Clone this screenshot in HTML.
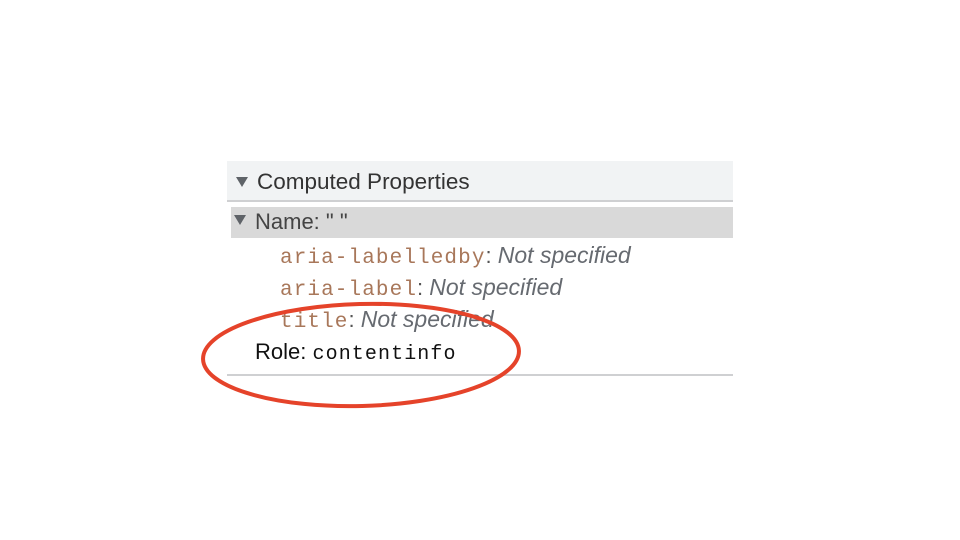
<!DOCTYPE html>
<html><head><style>
body{margin:0;width:960px;height:540px;background:#fff;position:relative;overflow:hidden;font-family:"Liberation Sans",sans-serif}
.a{position:absolute;white-space:nowrap}
.hdr{left:227px;top:161px;width:506px;height:39px;background:#f1f3f4;border-bottom:2px solid #cfd0d2}
.name{left:231px;top:207px;width:502px;height:31px;background:#d9d9d9}
.tri{position:absolute;width:0;height:0;border-left:6px solid transparent;border-right:6px solid transparent;border-top:10px solid #5f6368}
.m{font-family:"Liberation Mono",monospace;font-size:21px;letter-spacing:1.1px;color:#a8775a}
.i{font-style:italic;color:#666a70;font-size:23px}
.row{left:280px;font-size:22px;color:#555;line-height:24px}
</style></head><body>
<div class="a hdr"></div>
<div class="tri" style="left:236px;top:177px"></div>
<div class="a" style="left:257px;top:169px;font-size:22.5px;color:#333;line-height:26px">Computed Properties</div>
<div class="a name"></div>
<div class="tri" style="left:234px;top:215px"></div>
<div class="a" style="left:255px;top:210px;font-size:22px;color:#444;line-height:24px">Name: " "</div>
<div class="a row" style="top:243px"><span class="m">aria-labelledby</span>: <span class="i">Not specified</span></div>
<div class="a row" style="top:275px"><span class="m">aria-label</span>: <span class="i">Not specified</span></div>
<div class="a row" style="top:307px"><span class="m">title</span>: <span class="i">Not specified</span></div>
<div class="a" style="left:255px;top:340px;font-size:22px;color:#111;line-height:24px">Role: <span class="m" style="color:#111;font-size:20px;letter-spacing:1.1px">contentinfo</span></div>
<div class="a" style="left:227px;top:374px;width:506px;height:2px;background:#cfd0d2"></div>
<svg class="a" style="left:0;top:0" width="960" height="540">
<ellipse cx="361" cy="355" rx="158" ry="51" fill="none" stroke="#e5432a" stroke-width="4" transform="rotate(-1.5 361 355)"/>
</svg>
</body></html>
